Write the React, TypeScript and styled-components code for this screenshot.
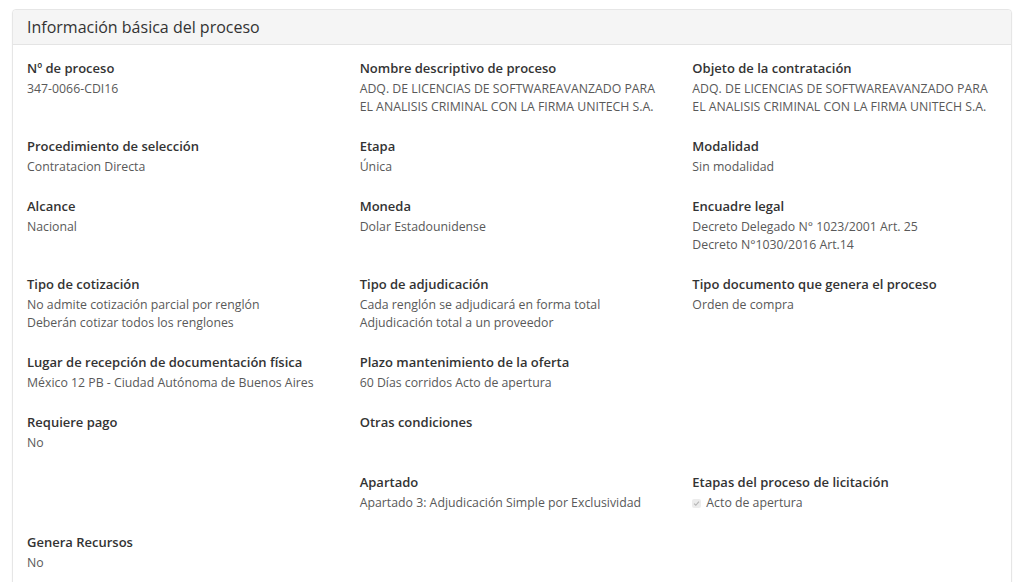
import React from "react";
import styled, { createGlobalStyle } from "styled-components";

const Global = createGlobalStyle`
  html, body { margin: 0; padding: 0; background: #ffffff; }
  body { font-family: "Open Sans", "Liberation Sans", sans-serif; }
`;

const Page = styled.div`
  padding: 9px 12px 0 12px;
`;

const Panel = styled.section`
  width: 1000px;
  box-sizing: border-box;
  border: 1px solid #e6e6e6;
  border-radius: 4px;
  box-shadow: 0 1px 2px rgba(0, 0, 0, 0.06);
  background: #fff;
`;

const PanelHeader = styled.header`
  background: #f5f5f5;
  border-bottom: 1px solid #e4e4e4;
  border-radius: 4px 4px 0 0;
  padding: 7px 14px;
  height: 35px;
  box-sizing: border-box;
`;

const Title = styled.h3`
  margin: 0;
  font-size: 16px;
  line-height: 20px;
  font-weight: 400;
  color: #333;
`;

const PanelBody = styled.div`
  padding: 14px 0 0 0;
`;

const Row = styled.div`
  display: grid;
  grid-template-columns: repeat(3, 1fr);
  margin-bottom: 21px;
`;

const Field = styled.div`
  padding: 0 14px;
`;

const Label = styled.div`
  font-size: 13px;
  font-weight: 600;
  line-height: 18px;
  margin-bottom: 3px;
  color: #333;
`;

const Value = styled.div`
  font-size: 12.3px;
  line-height: 18px;
  color: #595959;
  min-height: 18px;
`;

const CheckRow = styled.div`
  display: flex;
  align-items: center;
  gap: 5px;
  font-size: 12.3px;
  line-height: 18px;
  color: #595959;
`;

const CheckBox = styled.span`
  width: 9px;
  height: 9px;
  border-radius: 2px;
  background: #ececec;
  display: inline-flex;
  align-items: center;
  justify-content: center;
  margin-top: 1px;
`;

type Item = { label: string; value?: string[]; check?: string } | null;

const rows: Item[][] = [
  [
    { label: "Nº de proceso", value: ["347-0066-CDI16"] },
    {
      label: "Nombre descriptivo de proceso",
      value: ["ADQ. DE LICENCIAS DE SOFTWAREAVANZADO PARA", "EL ANALISIS CRIMINAL CON LA FIRMA UNITECH S.A."],
    },
    {
      label: "Objeto de la contratación",
      value: ["ADQ. DE LICENCIAS DE SOFTWAREAVANZADO PARA", "EL ANALISIS CRIMINAL CON LA FIRMA UNITECH S.A."],
    },
  ],
  [
    { label: "Procedimiento de selección", value: ["Contratacion Directa"] },
    { label: "Etapa", value: ["Única"] },
    { label: "Modalidad", value: ["Sin modalidad"] },
  ],
  [
    { label: "Alcance", value: ["Nacional"] },
    { label: "Moneda", value: ["Dolar Estadounidense"] },
    { label: "Encuadre legal", value: ["Decreto Delegado N° 1023/2001 Art. 25", "Decreto N°1030/2016 Art.14"] },
  ],
  [
    {
      label: "Tipo de cotización",
      value: ["No admite cotización parcial por renglón", "Deberán cotizar todos los renglones"],
    },
    {
      label: "Tipo de adjudicación",
      value: ["Cada renglón se adjudicará en forma total", "Adjudicación total a un proveedor"],
    },
    { label: "Tipo documento que genera el proceso", value: ["Orden de compra"] },
  ],
  [
    { label: "Lugar de recepción de documentación física", value: ["México 12 PB - Ciudad Autónoma de Buenos Aires"] },
    { label: "Plazo mantenimiento de la oferta", value: ["60 Días corridos Acto de apertura"] },
    null,
  ],
  [
    { label: "Requiere pago", value: ["No"] },
    { label: "Otras condiciones", value: [] },
    null,
  ],
  [
    null,
    { label: "Apartado", value: ["Apartado 3: Adjudicación Simple por Exclusividad"] },
    { label: "Etapas del proceso de licitación", check: "Acto de apertura" },
  ],
  [{ label: "Genera Recursos", value: ["No"] }, null, null],
];

export default function App() {
  return (
    <>
      <Global />
      <Page>
        <Panel>
          <PanelHeader>
            <Title>Información básica del proceso</Title>
          </PanelHeader>
          <PanelBody>
            {rows.map((r, i) => (
              <Row key={i}>
                {r.map((f, j) => (
                  <Field key={j}>
                    {f && (
                      <>
                        <Label>{f.label}</Label>
                        {f.check ? (
                          <CheckRow>
                            <CheckBox>
                              <svg width="7" height="7" viewBox="0 0 8 8">
                                <path d="M1.2 4.2 L3.2 6 L6.8 1.8" fill="none" stroke="#b5b5b5" strokeWidth="1.3" />
                              </svg>
                            </CheckBox>
                            {f.check}
                          </CheckRow>
                        ) : (
                          <Value>
                            {(f.value ?? []).map((v, k) => (
                              <div key={k}>{v}</div>
                            ))}
                          </Value>
                        )}
                      </>
                    )}
                  </Field>
                ))}
              </Row>
            ))}
          </PanelBody>
        </Panel>
      </Page>
    </>
  );
}
